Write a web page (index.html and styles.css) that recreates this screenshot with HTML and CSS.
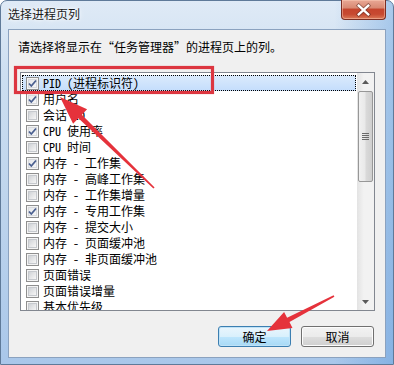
FILE: index.html
```html
<!DOCTYPE html>
<html lang="zh-CN">
<head>
<meta charset="utf-8">
<title>选择进程页列</title>
<link rel="stylesheet" href="styles.css">
</head>
<body>
<div class="window">
  <div class="titlebar">
    <span class="title">选择进程页列</span>
    <div class="close">
      <svg width="45" height="20" viewBox="0 0 45 20">
        <path d="M17.5 5.5 L27.5 14.5 M27.5 5.5 L17.5 14.5" stroke="#5a2a22" stroke-width="4.2" stroke-linecap="square" fill="none" opacity="0.55"/>
        <path d="M17.5 5.5 L27.5 14.5 M27.5 5.5 L17.5 14.5" stroke="#ffffff" stroke-width="2.4" stroke-linecap="square" fill="none"/>
      </svg>
    </div>
  </div>
  <div class="client">
    <div class="prompt">请选择将显示在“任务管理器”的进程页上的列。</div>
    <div class="listbox">
      <div class="items">
        <div class="row selected"><span class="cb checked"><svg width="11" height="11" viewBox="0 0 11 11"><path d="M2 5.5 L4.3 8 L9 2.5" stroke="#4a5f8f" stroke-width="1.8" fill="none"/></svg></span><span class="lbl">PID (进程标识符)</span></div>
        <div class="row"><span class="cb checked"><svg width="11" height="11" viewBox="0 0 11 11"><path d="M2 5.5 L4.3 8 L9 2.5" stroke="#4a5f8f" stroke-width="1.8" fill="none"/></svg></span><span class="lbl">用户名</span></div>
        <div class="row"><span class="cb"></span><span class="lbl">会话 ID</span></div>
        <div class="row"><span class="cb checked"><svg width="11" height="11" viewBox="0 0 11 11"><path d="M2 5.5 L4.3 8 L9 2.5" stroke="#4a5f8f" stroke-width="1.8" fill="none"/></svg></span><span class="lbl">CPU 使用率</span></div>
        <div class="row"><span class="cb"></span><span class="lbl">CPU 时间</span></div>
        <div class="row"><span class="cb checked"><svg width="11" height="11" viewBox="0 0 11 11"><path d="M2 5.5 L4.3 8 L9 2.5" stroke="#4a5f8f" stroke-width="1.8" fill="none"/></svg></span><span class="lbl">内存 - 工作集</span></div>
        <div class="row"><span class="cb"></span><span class="lbl">内存 - 高峰工作集</span></div>
        <div class="row"><span class="cb"></span><span class="lbl">内存 - 工作集增量</span></div>
        <div class="row"><span class="cb checked"><svg width="11" height="11" viewBox="0 0 11 11"><path d="M2 5.5 L4.3 8 L9 2.5" stroke="#4a5f8f" stroke-width="1.8" fill="none"/></svg></span><span class="lbl">内存 - 专用工作集</span></div>
        <div class="row"><span class="cb"></span><span class="lbl">内存 - 提交大小</span></div>
        <div class="row"><span class="cb"></span><span class="lbl">内存 - 页面缓冲池</span></div>
        <div class="row"><span class="cb"></span><span class="lbl">内存 - 非页面缓冲池</span></div>
        <div class="row"><span class="cb"></span><span class="lbl">页面错误</span></div>
        <div class="row"><span class="cb"></span><span class="lbl">页面错误增量</span></div>
        <div class="row"><span class="cb"></span><span class="lbl">基本优先级</span></div>
      </div>
      <div class="scrollbar">
        <div class="sb-btn"><svg width="7" height="4" viewBox="0 0 7 4"><path d="M0 4 L3.5 0 L7 4 Z" fill="#5a5a5a"/></svg></div>
        <div class="sb-thumb">
          <svg width="7" height="7" viewBox="0 0 7 7"><path d="M0 0.5 H7 M0 2.5 H7 M0 4.5 H7 M0 6.5 H7" stroke="#6b6b6b" stroke-width="1"/></svg>
        </div>
        <div class="sb-track"></div>
        <div class="sb-btn"><svg width="7" height="4" viewBox="0 0 7 4"><path d="M0 0 L3.5 4 L7 0 Z" fill="#5a5a5a"/></svg></div>
      </div>
    </div>
    <div class="buttons">
      <button class="btn default">确定</button>
      <button class="btn">取消</button>
    </div>
  </div>
  <svg class="annot" width="394" height="365" viewBox="0 0 394 365">
    <rect x="15.5" y="67.5" width="197" height="25" fill="none" stroke="#dc3640" stroke-width="3.2"/>
    <polygon points="60,97 87.1,109.3 81.8,114.7 154.6,187.4 153.4,188.6 78.4,118.3 73.1,123.7" fill="#e5323b"/>
    <polygon points="267,331 284.1,311.9 287.1,317.7 333.6,295.3 334.4,296.7 289.5,322.1 292.5,327.9" fill="#e5323b"/>
  </svg>
</div>
</body>
</html>
```

FILE: styles.css
```css
html, body {
  margin: 0;
  padding: 0;
  background: #ffffff;
}

body {
  width: 394px;
  height: 365px;
  overflow: hidden;
  font-family: "Noto Sans Mono CJK SC", "Noto Sans CJK SC", sans-serif;
  font-size: 12px;
  color: #000;
}

.window {
  position: relative;
  width: 394px;
  height: 365px;
  box-sizing: border-box;
  border: 1px solid #5f7a99;
  border-radius: 7px 7px 0 0;
  background:
    linear-gradient(to right, rgba(255,255,255,0) 85%, rgba(70,140,215,0.35) 100%),
    linear-gradient(to bottom, #dfeaf6 0%, #cddff1 20%, #bcd3ec 60%, #a9c7ea 100%);
  display: flex;
  flex-direction: column;
}

.titlebar {
  height: 28px;
  display: flex;
  justify-content: space-between;
  align-items: flex-start;
  flex: none;
}

.title {
  margin-top: 5px;
  margin-left: 7px;
  line-height: 16px;
  font-family: "Noto Sans CJK SC", sans-serif;
  font-size: 12px;
  color: #1a1a1a;
  text-shadow: 0 0 6px #fff, 0 0 3px #fff;
}

.close {
  width: 45px;
  height: 20px;
  margin-right: 7px;
  margin-top: -1px;
  box-sizing: border-box;
  border: 1px solid #7b2e23;
  border-top: none;
  border-radius: 0 0 4px 4px;
  background: linear-gradient(to bottom, #e9a895 0%, #d98a74 40%, #c5452d 50%, #c74a31 75%, #db7a58 100%);
  box-shadow: inset 0 0 0 1px rgba(255,210,190,0.45);
  display: flex;
}

.client {
  margin-left: 7px;
  width: 378px;
  height: 329px;
  box-sizing: border-box;
  border: 1px solid #8ba2bf;
  background: #f0f0f0;
  display: flex;
  flex-direction: column;
}

.prompt {
  margin-top: 9px;
  padding-left: 9px;
  line-height: 16px;
  white-space: nowrap;
}

.listbox {
  margin-top: 17px;
  margin-left: 11px;
  width: 355px;
  height: 239px;
  box-sizing: border-box;
  border: 1px solid #828790;
  background: #ffffff;
  display: flex;
}

.items {
  flex: 1;
  padding: 2px 1px 0 1px;
  overflow: hidden;
}

.row {
  height: 16px;
  display: flex;
  align-items: center;
  box-sizing: border-box;
  white-space: nowrap;
}

.row.selected {
  background: linear-gradient(to bottom, #dcebfc, #c4ddfc);
  outline: 1px dotted #000;
  outline-offset: -1px;
}

.cb {
  width: 13px;
  height: 13px;
  margin-left: 4px;
  box-sizing: border-box;
  border: 1px solid #8f8f8f;
  background: #f4f4f4;
  display: flex;
  align-items: center;
  justify-content: center;
  position: relative;
  flex: none;
}

.cb::before {
  content: "";
  position: absolute;
  left: 1px;
  top: 1px;
  width: 9px;
  height: 9px;
  box-sizing: border-box;
  border: 1px solid #c6c9ce;
  background: linear-gradient(135deg, #cfd2d6 0%, #e4e5e7 50%, #f6f6f6 100%);
}

.cb.checked::before {
  background: linear-gradient(135deg, #e6e8eb 0%, #f5f5f6 100%);
  border-color: #d7d9dd;
}

.cb svg {
  position: relative;
}

.lbl {
  margin-left: 4px;
  line-height: 16px;
}

.scrollbar {
  width: 17px;
  display: flex;
  flex-direction: column;
  background: linear-gradient(to right, #e3e3e3, #f2f2f2 40%, #f2f2f2);
  flex: none;
}

.sb-btn {
  height: 17px;
  display: flex;
  align-items: center;
  justify-content: center;
  flex: none;
}

.sb-thumb {
  height: 91px;
  margin: 1px 1px 0 1px;
  box-sizing: border-box;
  border: 1px solid #979797;
  border-radius: 2px;
  background: linear-gradient(to right, #f1f1f1 0%, #e9e9e9 45%, #d9d9d9 55%, #cfcfcf 100%);
  display: flex;
  align-items: center;
  justify-content: center;
  flex: none;
}

.sb-track {
  flex: 1;
}

.buttons {
  margin-top: 15px;
  padding-right: 11px;
  display: flex;
  justify-content: flex-end;
  gap: 10px;
}

.btn {
  width: 73px;
  height: 21px;
  margin: 0;
  padding: 0;
  box-sizing: border-box;
  border: 1px solid #707070;
  border-radius: 3px;
  background: linear-gradient(to bottom, #f2f2f2 0%, #ebebeb 50%, #dddddd 51%, #cfcfcf 100%);
  box-shadow: inset 0 0 0 1px #fcfcfc;
  font-family: "Noto Sans CJK SC", sans-serif;
  font-size: 12px;
  color: #000;
  line-height: 17px;
}

.btn.default {
  border-color: #3c7fb1;
  background: linear-gradient(to bottom, #eaf6fd 0%, #d9f0fc 50%, #bee6fd 51%, #a7d9f5 100%);
  box-shadow: inset 0 0 0 1px #bfe2f7;
}

.annot {
  position: absolute;
  left: -1px;
  top: -1px;
  pointer-events: none;
}
```
